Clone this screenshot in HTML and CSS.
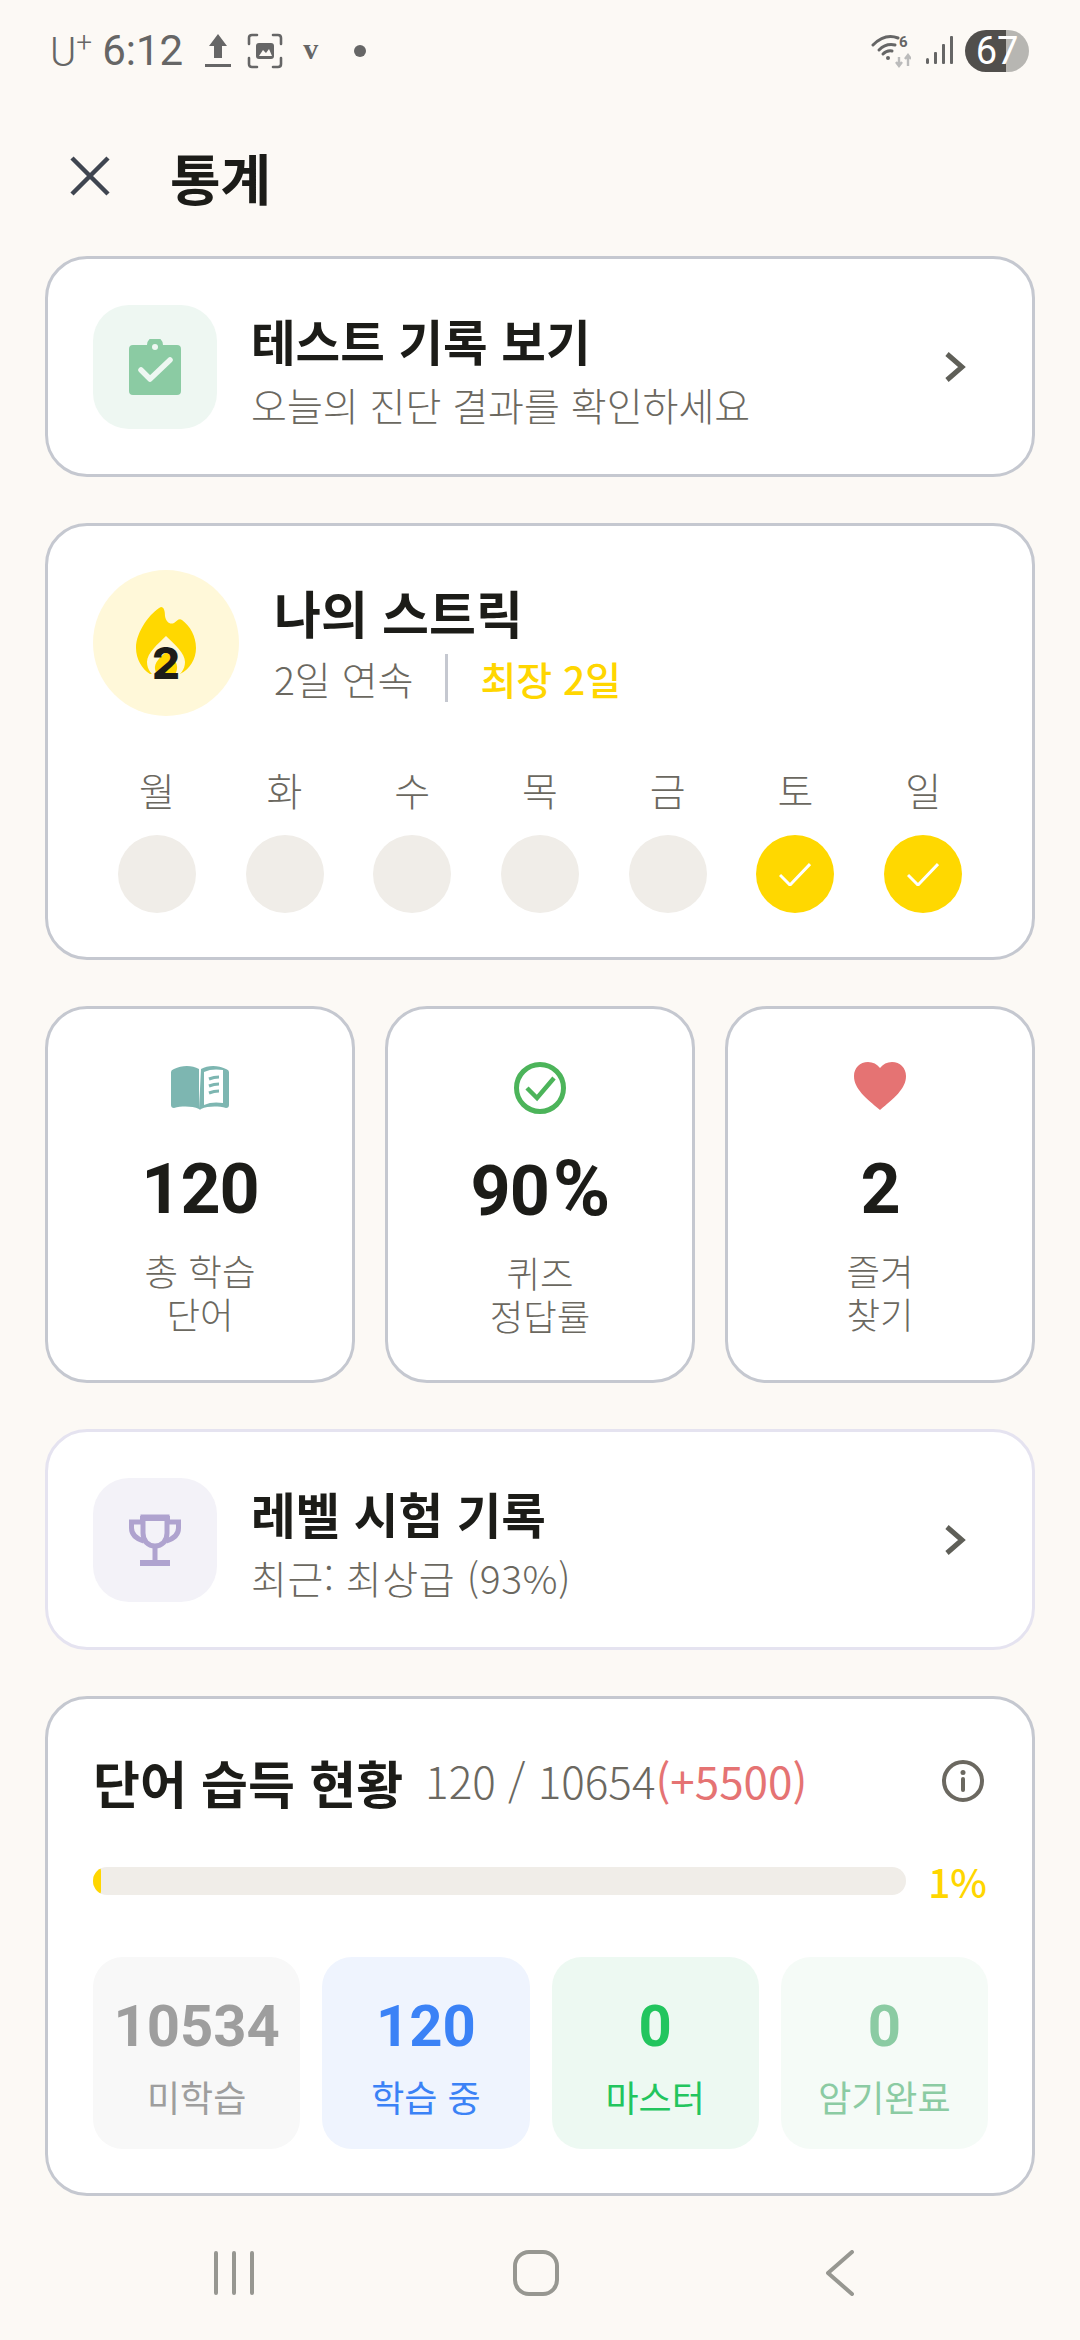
FILE: index.html
```html
<!DOCTYPE html>
<html lang="ko">
<head>
<meta charset="utf-8">
<title>통계</title>
<link rel="stylesheet" href="styles.css">
</head>
<body>
<div class="screen">
  <div class="statusbar">
    <div class="status-left">
      <span class="carrier">U<sup>+</sup></span>
      <span class="clock">6:12</span>
      <svg class="st-upload" viewBox="0 0 26 34"><path d="M13 0 22 12H17V24H9V12H4Z" fill="#666"/><rect y="30" width="26" height="3" fill="#666"/></svg>
      <svg class="st-shot" viewBox="0 0 36 36"><path d="M2 11V5Q2 2 5 2H10M26 2H31Q34 2 34 5V11M34 25V31Q34 34 31 34H26M10 34H5Q2 34 2 31V25" fill="none" stroke="#666" stroke-width="2.6" stroke-linecap="round"/><rect x="9" y="10" width="18" height="16" rx="3" fill="#666"/><path d="M12 23 16 17 19 20 22 16 25 23Z" fill="#fcf9f5"/></svg>
      <span class="st-v">v</span>
      <span class="st-dot"></span>
    </div>
    <div class="status-right">
      <svg class="st-wifi" viewBox="0 0 40 34"><g fill="none" stroke="#666" stroke-width="3" stroke-linecap="round"><path d="M2 11Q14 -1 27 4"/><path d="M8 16Q15 9 24 11"/><path d="M12 20Q16 16 21 17"/></g><circle cx="17" cy="24" r="2" fill="#666"/><text x="28" y="13" class="st-six">6</text><path d="M28 32V23M25 28 28 32 31 28M37 32V21M34 25 37 21 40 25" fill="none" stroke="#bbb" stroke-width="2.4"/></svg>
      <svg class="st-signal" viewBox="0 0 28 30"><g fill="#666"><rect x="0" y="22" width="3" height="6" rx="1.5"/><rect x="8" y="16" width="3" height="12" rx="1"/><rect x="16" y="8" width="3" height="20" rx="1"/><rect x="24" y="0" width="3" height="28" rx="1"/></g></svg>
      <div class="battery"><span>67</span></div>
    </div>
  </div>

  <header class="topbar">
    <svg class="close" viewBox="0 0 40 40"><path d="M2 2 38 38M38 2 2 38" fill="none" stroke="#3f4550" stroke-width="4.500"/></svg>
    <h1>통계</h1>
  </header>

  <main class="content">
    <section class="card row-card first">
      <div class="tile tile-green">
        <svg class="ic-clip" viewBox="0 0 52 56"><path d="M4 6H18A8 8 0 0 1 34 6H48Q52 6 52 10V52Q52 56 48 56H4Q0 56 0 52V10Q0 6 4 6Z" fill="#8bcba3"/><circle cx="26" cy="8" r="3" fill="#eef7f2"/><path d="M12 31 21 40 41 21" fill="none" stroke="#eef7f2" stroke-width="5.500" stroke-linecap="round" stroke-linejoin="round"/></svg>
      </div>
      <div class="row-text">
        <div class="row-title">테스트 기록 보기</div>
        <div class="row-sub">오늘의 진단 결과를 확인하세요</div>
      </div>
      <svg class="chev" viewBox="0 0 22 32"><path d="M3 3 18 16 3 29" fill="none" stroke="#5f5f58" stroke-width="5"/></svg>
    </section>

    <section class="card streak">
      <div class="streak-head">
        <div class="flame-wrap">
          <svg class="flame" viewBox="0 0 60 72"><path d="M25 0C28 0 29 4 29 9 30 15 34 18 38 16 41 14 43 11 46 13 54 19 60 29 60 41 60 52 54 62 44 67L14 67C6 62 0 52 0 41 0 24 15 5 25 0Z" fill="#ffd800"/><path d="M30 29C39 38 49 46 49 55 49 63 44 68 38 72H22C16 68 11 63 11 55 11 46 22 37 30 29Z" fill="#fff8d9"/><path d="M30 45C37 50 42 56 41 62 40 68 36 72 30 72 24 72 20 68 19 62 18 56 24 50 30 45Z" fill="#ffd800"/></svg>
          <span class="flame-num">2</span>
        </div>
        <div class="streak-text">
          <div class="streak-title">나의 스트릭</div>
          <div class="streak-sub"><span>2일 연속</span><i class="divider"></i><b>최장 2일</b></div>
        </div>
      </div>
      <div class="week">
        <div class="day"><span>월</span><i class="dot"></i></div>
        <div class="day"><span>화</span><i class="dot"></i></div>
        <div class="day"><span>수</span><i class="dot"></i></div>
        <div class="day"><span>목</span><i class="dot"></i></div>
        <div class="day"><span>금</span><i class="dot"></i></div>
        <div class="day"><span>토</span><i class="dot on"><svg viewBox="0 0 32 24"><path d="M1 13 11 23 31 2" fill="none" stroke="#fff" stroke-width="3"/></svg></i></div>
        <div class="day"><span>일</span><i class="dot on"><svg viewBox="0 0 32 24"><path d="M1 13 11 23 31 2" fill="none" stroke="#fff" stroke-width="3"/></svg></i></div>
      </div>
    </section>

    <section class="stats">
      <div class="card stat">
        <svg class="stat-ic" viewBox="0 0 58 52"><path d="M3 7C11 3 21 3 28 7V47C21 44 11 44 3 46Q0 46 0 43V10Q0 8 3 7Z" fill="#7db6b1"/><path d="M30 7C37 3 47 3 55 7Q58 8 58 10V43Q58 46 55 46C47 44 37 44 30 47Q29 48.500 28 47" fill="#7db6b1"/><path d="M33 10C39 7 46 7 52 8V41C46 40 39 40 33 43Z" fill="#fff"/><path d="M38 17Q43 15 48 15M38 24Q43 22 48 22M38 31Q43 29 48 29" fill="none" stroke="#7db6b1" stroke-width="3"/></svg>
        <div class="stat-num">120</div>
        <div class="stat-label">총 학습<br>단어</div>
      </div>
      <div class="card stat">
        <svg class="stat-ic" viewBox="0 0 52 52"><circle cx="26" cy="26" r="23.500" fill="none" stroke="#4cb45a" stroke-width="5"/><path d="M13 26 23 36 40 16" fill="none" stroke="#4cb45a" stroke-width="4.500"/></svg>
        <div class="stat-num">90<span class="unit">%</span></div>
        <div class="stat-label">퀴즈<br>정답률</div>
      </div>
      <div class="card stat">
        <svg class="stat-ic heart" viewBox="0 0 52 48"><path d="M26 48C12 36 0 27 0 14 0 6 6 0 14 0 19 0 23 2 26 6 29 2 33 0 38 0 46 0 52 6 52 14 52 27 40 36 26 48Z" fill="#e57373"/></svg>
        <div class="stat-num">2</div>
        <div class="stat-label">즐겨<br>찾기</div>
      </div>
    </section>

    <section class="card row-card level">
      <div class="tile tile-purple">
        <svg class="ic-trophy" viewBox="0 0 52 52"><g fill="none" stroke="#afa3cf" stroke-width="5"><path d="M14 3H38V19C38 27 33 32 26 32 19 32 14 27 14 19Z"/><path d="M14 8H2.500V14C2.500 21 8 25 15 27M38 8H49.500V14C49.500 21 44 25 37 27"/><path d="M26 32V49"/></g><rect x="11" y="46" width="30" height="6" fill="#afa3cf"/><rect x="11" y="2" width="30" height="5" fill="#afa3cf"/></svg>
      </div>
      <div class="row-text">
        <div class="row-title">레벨 시험 기록</div>
        <div class="row-sub">최근: 최상급 (93%)</div>
      </div>
      <svg class="chev" viewBox="0 0 22 32"><path d="M3 3 18 16 3 29" fill="none" stroke="#5f5f58" stroke-width="5"/></svg>
    </section>

    <section class="card vocab">
      <div class="vocab-head">
        <span class="vocab-title">단어 습득 현황</span>
        <span class="vocab-count">120 / 10654<em>(+5500)</em></span>
        <svg class="info" viewBox="0 0 42 42"><circle cx="21" cy="21" r="19" fill="none" stroke="#6b6860" stroke-width="4"/><circle cx="21" cy="12.500" r="2.500" fill="#6b6860"/><path d="M21 19V30" stroke="#6b6860" stroke-width="4" stroke-linecap="round"/></svg>
      </div>
      <div class="progress">
        <div class="track"><div class="fill" style="width:1%"></div></div>
        <span class="pct">1%</span>
      </div>
      <div class="tiles">
        <div class="mini m-gray"><strong>10534</strong><span>미학습</span></div>
        <div class="mini m-blue"><strong>120</strong><span>학습 중</span></div>
        <div class="mini m-green"><strong>0</strong><span>마스터</span></div>
        <div class="mini m-mint"><strong>0</strong><span>암기완료</span></div>
      </div>
    </section>
  </main>

  <nav class="navbar">
    <svg class="nav-recent" viewBox="0 0 44 44"><path d="M4 2V42M22 2V42M40 2V42" stroke="#979791" stroke-width="4" stroke-linecap="round"/></svg>
    <svg class="nav-home" viewBox="0 0 46 46"><rect x="2" y="2" width="42" height="42" rx="14" fill="none" stroke="#979791" stroke-width="4"/></svg>
    <svg class="nav-back" viewBox="0 0 28 46"><path d="M26 2 2 23 26 44" fill="none" stroke="#979791" stroke-width="4" stroke-linecap="round" stroke-linejoin="round"/></svg>
  </nav>
</div>
</body>
</html>
```
FILE: styles.css
```css
* { box-sizing: border-box; }
html, body { margin: 0; padding: 0; }
body {
  width: 1080px;
  height: 2340px;
  background: #fcf9f5;
  color: #1c1c18;
  font-family: "Noto Sans CJK KR", "Noto Sans", sans-serif;
  overflow: hidden;
}
.screen { width: 1080px; height: 2340px; display: flex; flex-direction: column; }

.statusbar {
  height: 102px;
  padding: 0 51px 0 50px;
  display: flex;
  justify-content: space-between;
  align-items: center;
  color: #666;
  font-family: Roboto, sans-serif;
}
.status-left, .status-right { display: flex; align-items: center; }
.carrier { font-size: 40px; font-weight: 300; line-height: 1; margin-right: 10px; position: relative; top: 2px; }
.carrier sup { font-size: 28px; line-height: 0; vertical-align: 14px; }
.clock { font-size: 42px; line-height: 1; margin-right: 22px; }
.st-upload { width: 26px; height: 34px; margin-right: 16px; }
.st-shot { width: 36px; height: 36px; margin-right: 20px; }
.st-v { font-family: "Liberation Serif", serif; font-weight: 700; font-size: 30px; line-height: 1; width: 18px; margin-right: 33px; position: relative; top: -2px; }
.st-dot { width: 12px; height: 12px; border-radius: 50%; background: #666; }
.st-wifi { width: 40px; height: 34px; margin-right: 15px; }
.st-six { font-family: Roboto, sans-serif; font-size: 15px; font-weight: 700; fill: #666; }
.st-signal { width: 28px; height: 30px; margin-right: 11px; }
.battery {
  width: 64px; height: 42px; border-radius: 21px;
  background: linear-gradient(90deg, #514f4c 0 64%, #b7b6b2 64% 100%);
  color: #fff; font-size: 38px; line-height: 42px; text-align: center;
}

.topbar { height: 154px; padding: 0 0 6px 70px; display: flex; align-items: center; gap: 60px; }
.close { width: 40px; height: 40px; }
.topbar h1 { margin: 0; font-size: 55px; font-weight: 700; line-height: 1; color: #1c1c18; }

.content { padding: 0 45px; display: flex; flex-direction: column; gap: 46px; }
.card { background: #fff; border: 3px solid #c5c8d0; border-radius: 42px; }

.row-card { height: 221px; padding: 0 45px; display: flex; align-items: center; }
.level { border-color: #e5e3f0; }
.tile { width: 124px; height: 124px; flex: none; border-radius: 36px; display: flex; align-items: center; justify-content: center; }
.tile-green { background: #eef7f2; }
.tile-purple { background: #f3f2f8; }
.ic-clip { width: 52px; height: 56px; }
.ic-trophy { width: 52px; height: 52px; }
.row-text { flex: 1; margin-left: 34px; padding-top: 6px; display: flex; flex-direction: column; }
.row-title { font-size: 48.5px; font-weight: 700; line-height: 62px; }
.row-sub { font-size: 39px; font-weight: 300; line-height: 54px; margin-top: 6px; color: #6b6860; }
.level .row-sub { letter-spacing: .6px; }
.chev { width: 22px; height: 32px; margin-right: 21px; }

.streak { padding: 44px 45px; height: 437px; }
.streak-head { display: flex; align-items: center; }
.flame-wrap { width: 146px; height: 146px; flex: none; border-radius: 50%; background: #fff8d9; position: relative; display: flex; align-items: center; justify-content: center; }
.flame { width: 60px; height: 72px; }
.flame-num { position: absolute; left: 0; right: 0; top: 71px; text-align: center; font-family: Inter, Roboto, sans-serif; font-weight: 800; font-size: 44px; line-height: 44px; color: #1c1c18; }
.streak-text { margin-left: 35px; margin-bottom: 4px; }
.streak-title { font-size: 51px; font-weight: 700; line-height: 70px; margin-bottom: 4px; }
.streak-sub { display: flex; align-items: center; height: 54px; font-size: 39px; font-weight: 300; color: #6b6860; }
.streak-sub b { font-weight: 500; color: #ffd600; }
.divider { width: 3px; height: 48px; background: #c5c8d0; margin: 0 32px; }
.week { display: grid; grid-template-columns: repeat(7, 1fr); margin-top: 48px; }
.day { display: flex; flex-direction: column; align-items: center; gap: 21px; }
.day span { font-size: 39px; font-weight: 300; line-height: 50px; color: #6b6860; }
.dot { width: 78px; height: 78px; border-radius: 50%; background: #f0ede8; display: flex; align-items: center; justify-content: center; }
.dot.on { background: #ffd800; }
.dot svg { width: 32px; height: 24px; }

.stats { display: grid; grid-template-columns: repeat(3, 1fr); gap: 30px; }
.stat { height: 377px; padding-top: 53px; display: flex; flex-direction: column; align-items: center; text-align: center; }
.stat-ic { height: 52px; width: 58px; }
.stat-ic.heart { width: 52px; height: 48px; margin-bottom: 4px; }
.stat-num { font-family: Roboto, sans-serif; font-weight: 700; font-size: 70px; line-height: 70px; margin-top: 40px; letter-spacing: -1px; }
.unit { font-size: 78px; margin-left: 4px; }
.stat-label { font-size: 36.5px; font-weight: 300; line-height: 43px; color: #6b6860; margin-top: 25px; }

.vocab { height: 500px; padding: 43px 45px 0; }
.vocab-head { display: flex; align-items: center; height: 80px; }
.vocab-title { font-size: 51px; font-weight: 700; }
.vocab-count { font-size: 44px; font-weight: 300; color: #6b6860; margin-left: 22px; margin-bottom: 4px; flex: 1; }
.vocab-count em { font-style: normal; font-weight: 400; color: #e57373; }
.info { width: 42px; height: 42px; margin-right: 3px; margin-bottom: 3px; }
.progress { display: flex; align-items: center; margin-top: 45px; }
.track { width: 815px; height: 28px; border-radius: 14px; background: #f0ede8; overflow: hidden; }
.fill { height: 100%; background: #ffd600; border-radius: 14px; }
.pct { font-size: 39px; font-weight: 500; color: #ffd600; margin-left: 22px; line-height: 28px; }
.tiles { display: grid; grid-template-columns: repeat(4, 1fr); gap: 22px; margin-top: 62px; width: 895px; }
.mini { height: 192px; border-radius: 30px; display: flex; flex-direction: column; align-items: center; padding-top: 36px; }
.mini strong { font-family: Roboto, sans-serif; font-weight: 700; font-size: 58px; line-height: 66px; }
.mini span { font-size: 36px; font-weight: 400; line-height: 48px; margin-top: 13px; }
.m-gray { background: #f8f8f8; color: #9e9e9e; }
.m-blue { background: #eff4fe; color: #3b82f6; }
.m-green { background: #edf9f2; color: #22c55e; }
.m-mint { background: #f5fbf7; color: #8bcba3; }

.navbar { flex: 1; display: flex; align-items: center; padding-top: 10px; }
.nav-recent { width: 44px; height: 44px; margin-left: 212px; }
.nav-home { width: 46px; height: 46px; margin-left: 257px; }
.nav-back { width: 28px; height: 46px; margin-left: 267px; }
```
